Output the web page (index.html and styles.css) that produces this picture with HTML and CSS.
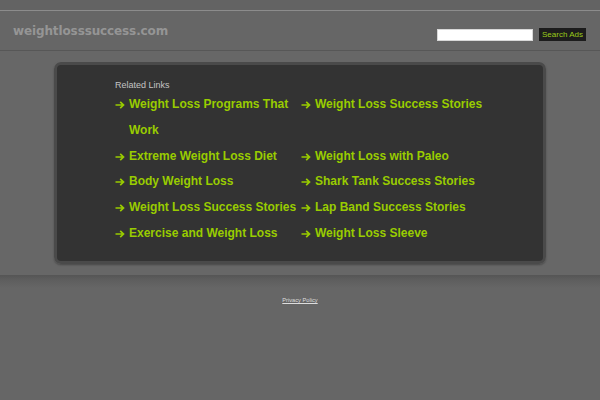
FILE: index.html
```html
<!DOCTYPE html>
<html>
<head>
<meta charset="utf-8">
<link rel="stylesheet" href="styles.css">
</head>
<body>
<div class="topstrip"></div>
<header class="header">
  <div class="title">weightlosssuccess.com</div>
  <form class="search">
    <input class="search-input" type="text">
    <button class="search-btn" type="button">Search Ads</button>
  </form>
</header>
<main class="band">
  <section class="box">
    <div class="box-inner">
      <div class="related">Related Links</div>
      <ul class="links">
        <li><svg class="arr" viewBox="0 0 10 8"><path d="M0.5 4H8.5M5.2 0.8L8.5 4L5.2 7.2"/></svg><a href="#">Weight Loss Programs That Work</a></li>
        <li><svg class="arr" viewBox="0 0 10 8"><path d="M0.5 4H8.5M5.2 0.8L8.5 4L5.2 7.2"/></svg><a href="#">Weight Loss Success Stories</a></li>
        <li><svg class="arr" viewBox="0 0 10 8"><path d="M0.5 4H8.5M5.2 0.8L8.5 4L5.2 7.2"/></svg><a href="#">Extreme Weight Loss Diet</a></li>
        <li><svg class="arr" viewBox="0 0 10 8"><path d="M0.5 4H8.5M5.2 0.8L8.5 4L5.2 7.2"/></svg><a href="#">Weight Loss with Paleo</a></li>
        <li><svg class="arr" viewBox="0 0 10 8"><path d="M0.5 4H8.5M5.2 0.8L8.5 4L5.2 7.2"/></svg><a href="#">Body Weight Loss</a></li>
        <li><svg class="arr" viewBox="0 0 10 8"><path d="M0.5 4H8.5M5.2 0.8L8.5 4L5.2 7.2"/></svg><a href="#">Shark Tank Success Stories</a></li>
        <li><svg class="arr" viewBox="0 0 10 8"><path d="M0.5 4H8.5M5.2 0.8L8.5 4L5.2 7.2"/></svg><a href="#">Weight Loss Success Stories</a></li>
        <li><svg class="arr" viewBox="0 0 10 8"><path d="M0.5 4H8.5M5.2 0.8L8.5 4L5.2 7.2"/></svg><a href="#">Lap Band Success Stories</a></li>
        <li><svg class="arr" viewBox="0 0 10 8"><path d="M0.5 4H8.5M5.2 0.8L8.5 4L5.2 7.2"/></svg><a href="#">Exercise and Weight Loss</a></li>
        <li><svg class="arr" viewBox="0 0 10 8"><path d="M0.5 4H8.5M5.2 0.8L8.5 4L5.2 7.2"/></svg><a href="#">Weight Loss Sleeve</a></li>
      </ul>
    </div>
  </section>
</main>
<footer class="footer">
  <a class="privacy" href="#">Privacy Policy</a>
</footer>
</body>
</html>
```
FILE: styles.css
```css
html, body {
  margin: 0;
  padding: 0;
}
body {
  background: #666666;
  font-family: "Liberation Sans", Arial, sans-serif;
  height: 400px;
  overflow: hidden;
}
.topstrip {
  height: 10px;
  background: #636363;
  border-bottom: 1px solid #8c8c8c;
}
.header {
  height: 39px;
  background: #666666;
  border-bottom: 1px solid #575757;
  display: flex;
  justify-content: space-between;
  align-items: flex-start;
  padding: 0 14px 0 13px;
}
.title {
  margin-top: 13px;
  font-family: "DejaVu Sans", Verdana, sans-serif;
  font-weight: bold;
  font-size: 12px;
  line-height: 14px;
  letter-spacing: -0.12px;
  color: #959595;
}
.search {
  display: flex;
  align-items: center;
  margin: 17px 0 0 0;
  gap: 6px;
}
.search-input {
  width: 96px;
  height: 12px;
  box-sizing: border-box;
  border: 1px solid #d8d8d8;
  background: #ffffff;
  padding: 0;
  margin: 0;
}
.search-btn {
  height: 13px;
  width: 47px;
  box-sizing: border-box;
  background: #1c1c1c;
  color: #9acb1a;
  border: 0;
  padding: 0;
  margin: 0;
  font-family: "Liberation Sans", Arial, sans-serif;
  font-size: 8px;
  line-height: 13px;
}
.band {
  display: block;
  height: 202px;
  padding: 11px 0;
  background: #676767;
}
.box {
  width: 492px;
  height: 202px;
  margin: 0 auto;
  box-sizing: border-box;
  background: #333333;
  border: 3px solid #4a4a4a;
  border-radius: 7px;
  box-shadow: 0 0 1px #7a7a7a, 0 1px 2px rgba(0,0,0,0.35);
}
.box-inner {
  padding: 14px 0 0 58px;
}
.related {
  font-size: 9px;
  line-height: 12px;
  margin-bottom: 1px;
  color: #c4c4c4;
}
.links {
  list-style: none;
  margin: 0;
  padding: 0;
  display: grid;
  grid-template-columns: 186px 186px;
}
.links li {
  display: flex;
  align-items: flex-start;
  font-size: 12px;
  font-weight: bold;
  line-height: 25.8px;
}
.arr {
  flex: none;
  width: 10px;
  height: 8px;
  margin: 9px 4px 0 0;
  fill: none;
  stroke: #99cc00;
  stroke-width: 1.7;
}
.links a {
  color: #99cc00;
  text-decoration: none;
}
.footer {
  height: 120px;
  background: linear-gradient(#555555 0px, #5e5e5e 5px, #666666 13px, #666666 100%);
  text-align: center;
  padding-top: 13px;
  box-sizing: border-box;
}
.privacy {
  font-size: 5.7px;
  line-height: 8px;
  color: #dddddd;
  text-decoration: underline;
}
```
